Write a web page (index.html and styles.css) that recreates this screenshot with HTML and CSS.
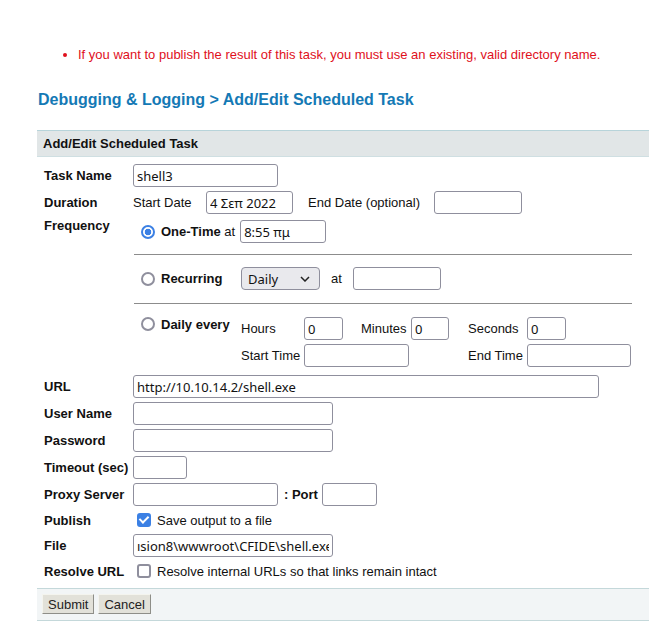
FILE: index.html
```html
<!DOCTYPE html>
<html>
<head>
<meta charset="utf-8">
<link rel="stylesheet" href="styles.css">
</head>
<body>
<div class="page">
  <ul class="errors">
    <li>If you want to publish the result of this task, you must use an existing, valid directory name.</li>
  </ul>
  <h2 class="title">Debugging &amp; Logging &gt; Add/Edit Scheduled Task</h2>

  <div class="bar">Add/Edit Scheduled Task</div>

  <div class="form">
    <div class="lbl">Task Name</div>
    <div class="cell"><input class="txt w145" type="text" value="shell3"></div>

    <div class="lbl">Duration</div>
    <div class="cell">
      <span class="t w73">Start Date</span>
      <input class="txt w87" type="text" value="4 Σεπ 2022">
      <span class="t ml15 w126">End Date (optional)</span>
      <input class="txt w88" type="text" value="">
    </div>

    <div class="lbl top">Frequency</div>
    <div class="freq">
      <div class="opt">
        <input class="radio" type="radio" name="f" checked>
        <span class="t"><b>One-Time</b> at</span>
        <input class="txt w86 ml5" type="text" value="8:55 πμ">
      </div>
      <div class="rule"></div>
      <div class="opt">
        <span class="head"><input class="radio" type="radio" name="f"><b>Recurring</b></span>
        <span class="sel">
          <select class="select"><option>Daily</option></select>
          <svg class="chev" width="10" height="6" viewBox="0 0 10 6"><path d="M1 1l4 4 4-4" fill="none" stroke="#222" stroke-width="1.5"/></svg>
        </span>
        <span class="t ml11">at</span>
        <input class="txt w88 ml11" type="text" value="">
      </div>
      <div class="rule"></div>
      <div class="opt daily">
        <span class="head up"><input class="radio" type="radio" name="f"><b>Daily every</b></span>
        <div class="dgrid">
          <span class="t">Hours</span>
          <input class="txt w39" type="text" value="0">
          <span class="t">Minutes</span>
          <input class="txt w38" type="text" value="0">
          <span class="t">Seconds</span>
          <input class="txt w39" type="text" value="0">
          <span class="t">Start Time</span>
          <input class="txt w105 span3" type="text" value="">
          <span class="t">End Time</span>
          <input class="txt w104" type="text" value="">
        </div>
      </div>
    </div>

    <div class="lbl">URL</div>
    <div class="cell"><input class="txt w466" type="text" value="http://10.10.14.2/shell.exe"></div>

    <div class="lbl">User Name</div>
    <div class="cell"><input class="txt w200" type="text" value=""></div>

    <div class="lbl">Password</div>
    <div class="cell"><input class="txt w200" type="password" value=""></div>

    <div class="lbl">Timeout (sec)</div>
    <div class="cell"><input class="txt w54" type="text" value=""></div>

    <div class="lbl">Proxy Server</div>
    <div class="cell">
      <input class="txt w145" type="text" value="">
      <span class="t ml6"><b>: Port</b></span>
      <input class="txt w55 ml4" type="text" value="">
    </div>

    <div class="lbl short">Publish</div>
    <div class="cell short">
      <input class="check" type="checkbox" checked>
      <span class="t">Save output to a file</span>
    </div>

    <div class="lbl">File</div>
    <div class="cell"><input class="txt w200 file" type="text" value="ısion8\wwwroot\CFIDE\shell.exe"></div>

    <div class="lbl short">Resolve URL</div>
    <div class="cell short">
      <input class="check" type="checkbox">
      <span class="t">Resolve internal URLs so that links remain intact</span>
    </div>
  </div>

  <div class="footer">
    <button class="btn" type="button">Submit</button>
    <button class="btn" type="button">Cancel</button>
  </div>
</div>
</body>
</html>
```

FILE: styles.css
```css
html, body {
  margin: 0;
  padding: 0;
  background: #ffffff;
}
body {
  font-family: "Liberation Sans", Arial, sans-serif;
  font-size: 13px;
  color: #111111;
}
.page {
  padding-left: 37px;
}
.errors {
  margin: 0;
  padding: 47px 0 0 41px;
  line-height: 16px;
  color: #e0101c;
  list-style: disc;
}
.title {
  margin: 27px 0 0 1px;
  font-size: 16px;
  line-height: 20px;
  font-weight: bold;
  color: #1479b5;
}
.bar {
  margin-top: 20px;
  height: 25px;
  line-height: 25px;
  padding-left: 6px;
  background: #e1e6e7;
  border-top: 1px solid #b7d4da;
  border-bottom: 1px solid #cfdfe2;
  font-weight: bold;
  color: #111;
}
.form {
  display: grid;
  grid-template-columns: 96px 1fr;
  row-gap: 4px;
  padding-top: 7px;
}
.lbl {
  padding-left: 7px;
  font-weight: bold;
  height: 23px;
  display: flex;
  align-items: center;
  white-space: nowrap;
}
.lbl.top {
  height: auto;
  align-items: flex-start;
  line-height: 15px;
}
.lbl.short, .cell.short {
  height: 20px;
}
.cell {
  display: flex;
  align-items: center;
  height: 23px;
  white-space: nowrap;
}
.t {
  display: inline-block;
  white-space: nowrap;
}
.w73 { width: 73px; }
.w126 { width: 126px; }
.txt {
  box-sizing: border-box;
  height: 23px;
  margin: 0;
  padding: 0 3px;
  border: 1px solid #8f8f9d;
  border-radius: 3px;
  background: #fff;
  font-family: "Noto Sans", "Open Sans", sans-serif;
  font-size: 13px;
  color: #111;
  outline: none;
}
.ml4 { margin-left: 4px; }
.ml5 { margin-left: 5px; }
.ml6 { margin-left: 6px; }
.ml11 { margin-left: 11px; }
.ml15 { margin-left: 15px; }
.w38 { width: 38px; }
.w39 { width: 39px; }
.w54 { width: 54px; }
.w55 { width: 55px; }
.w86 { width: 86px; }
.w87 { width: 87px; }
.w88 { width: 88px; }
.w104 { width: 104px; }
.w105 { width: 105px; }
.w145 { width: 145px; }
.w200 { width: 200px; }
.w466 { width: 466px; }
.file { text-align: left; }

.freq {
  padding: 2px 0 4px 0;
}
.opt {
  display: flex;
  align-items: center;
  height: 23px;
  padding-left: 8px;
  white-space: nowrap;
}
.rule {
  margin: 11px 0 12px 1px;
  width: 498px;
  border-top: 1px solid #8c8c8c;
}
.rule + .opt + .rule {
  margin-top: 13px;
  margin-bottom: 13px;
}
.head {
  display: flex;
  align-items: center;
  width: 100px;
}
.head.up {
  align-items: flex-start;
  padding-top: 0;
}
.radio {
  -webkit-appearance: none;
  appearance: none;
  box-sizing: border-box;
  width: 14px;
  height: 14px;
  margin: 0 6px 0 0;
  border: 2px solid #8f8f9d;
  border-radius: 50%;
  background: #fff;
  flex: none;
}
.radio:checked {
  border-color: #3b80e4;
  background: radial-gradient(circle, #3b80e4 0 3px, #fff 3.6px);
}
.sel {
  position: relative;
  display: inline-block;
  height: 23px;
}
.select {
  -webkit-appearance: none;
  appearance: none;
  box-sizing: border-box;
  width: 79px;
  height: 23px;
  margin: 0;
  padding: 0 0 0 6px;
  border: 1px solid #8f8f9d;
  border-radius: 4px;
  background: #e9e9ed;
  font-family: "Noto Sans", "Open Sans", sans-serif;
  font-size: 13px;
  color: #111;
}
.chev {
  position: absolute;
  right: 10px;
  top: 9px;
  pointer-events: none;
}
.opt.daily {
  height: auto;
  align-items: flex-start;
}
.dgrid {
  display: grid;
  grid-template-columns: 63px 57px 50px 57px 59px auto;
  grid-template-rows: 23px 23px;
  row-gap: 4px;
  align-items: center;
  justify-items: start;
}
.span3 {
  grid-column: span 3;
}
.check {
  -webkit-appearance: none;
  appearance: none;
  position: relative;
  box-sizing: border-box;
  width: 14px;
  height: 14px;
  margin: 0 6px 0 4px;
  border: 2px solid #8f8f9d;
  border-radius: 3px;
  background: #fff;
  flex: none;
}
.check:checked {
  border-color: #3b80e4;
  background: #3b80e4;
}
.check:checked::after {
  content: "";
  position: absolute;
  left: 2px;
  top: -1px;
  width: 4px;
  height: 7px;
  border: solid #fff;
  border-width: 0 2px 2px 0;
  transform: rotate(45deg);
}
.footer {
  margin-top: 7px;
  padding: 5px 0 6px 5px;
  background: #f2f5f6;
  border-top: 1px solid #c4d8da;
  border-bottom: 1px solid #c4d8da;
  display: flex;
  gap: 4px;
}
.btn {
  box-sizing: border-box;
  height: 20px;
  margin: 0;
  padding: 0 5px;
  background: #e2e1d9;
  border: 1px solid;
  border-color: #f4f4ee #8e8e88 #8e8e88 #f4f4ee;
  border-radius: 0;
  font-family: "Liberation Sans", Arial, sans-serif;
  font-size: 13px;
  color: #222;
}
```
